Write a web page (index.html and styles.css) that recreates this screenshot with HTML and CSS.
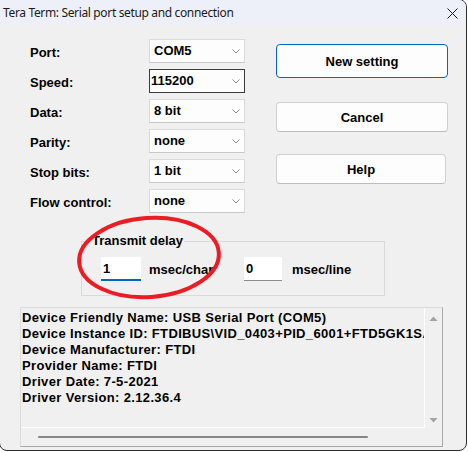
FILE: index.html
```html
<!DOCTYPE html>
<html>
<head>
<meta charset="utf-8">
<link rel="stylesheet" href="styles.css">
</head>
<body>
<div class="window">
  <div class="titlebar">
    <span class="title">Tera Term: Serial port setup and connection</span>
    <svg class="close" width="11" height="11" viewBox="0 0 11 11"><path d="M0.5 0.5L10.5 10.5M10.5 0.5L0.5 10.5" stroke="#1b1b1b" stroke-width="1" fill="none"/></svg>
  </div>
  <div class="content">
    <div class="top">
      <div class="fields">
        <div class="row"><span class="label">Port:</span><div class="combo"><span>COM5</span><svg class="chev" width="8" height="5" viewBox="0 0 8 5"><path d="M0.5 0.5L4 4L7.5 0.5" stroke="#8a8a8a" fill="none"/></svg></div></div>
        <div class="row"><span class="label">Speed:</span><div class="combo focus"><span>115200</span><svg class="chev" width="8" height="5" viewBox="0 0 8 5"><path d="M0.5 0.5L4 4L7.5 0.5" stroke="#8a8a8a" fill="none"/></svg></div></div>
        <div class="row"><span class="label">Data:</span><div class="combo"><span>8 bit</span><svg class="chev" width="8" height="5" viewBox="0 0 8 5"><path d="M0.5 0.5L4 4L7.5 0.5" stroke="#8a8a8a" fill="none"/></svg></div></div>
        <div class="row"><span class="label">Parity:</span><div class="combo"><span>none</span><svg class="chev" width="8" height="5" viewBox="0 0 8 5"><path d="M0.5 0.5L4 4L7.5 0.5" stroke="#8a8a8a" fill="none"/></svg></div></div>
        <div class="row"><span class="label">Stop bits:</span><div class="combo"><span>1 bit</span><svg class="chev" width="8" height="5" viewBox="0 0 8 5"><path d="M0.5 0.5L4 4L7.5 0.5" stroke="#8a8a8a" fill="none"/></svg></div></div>
        <div class="row"><span class="label">Flow control:</span><div class="combo"><span>none</span><svg class="chev" width="8" height="5" viewBox="0 0 8 5"><path d="M0.5 0.5L4 4L7.5 0.5" stroke="#8a8a8a" fill="none"/></svg></div></div>
      </div>
      <div class="buttons">
        <div class="btn default">New setting</div>
        <div class="btn cancel">Cancel</div>
        <div class="btn help">Help</div>
      </div>
    </div>
    <fieldset class="group">
      <legend>Transmit delay</legend>
      <div class="delay">
        <div class="edit e1">1</div>
        <span class="unit u1">msec/char</span>
        <div class="edit e2">0</div>
        <span class="unit u2">msec/line</span>
      </div>
    </fieldset>
    <div class="info">
      <div class="text">
        <div>Device Friendly Name: USB Serial Port (COM5)</div>
        <div>Device Instance ID: FTDIBUS\VID_0403+PID_6001+FTD5GK1SA\0000</div>
        <div>Device Manufacturer: FTDI</div>
        <div>Provider Name: FTDI</div>
        <div>Driver Date: 7-5-2021</div>
        <div>Driver Version: 2.12.36.4</div>
      </div>
      <div class="vsb">
        <svg width="9" height="5" viewBox="0 0 9 5"><path d="M0.5 5L4.5 0.5L8.5 5Z" fill="#a3a3a3"/></svg>
        <svg width="9" height="5" viewBox="0 0 9 5"><path d="M0.5 0L4.5 4.5L8.5 0Z" fill="#a3a3a3"/></svg>
      </div>
      <div class="hsb"><div class="thumb"></div></div>
      <div class="corner"></div>
    </div>
  </div>
  <svg class="annot" width="165" height="104" viewBox="0 0 165 104"><ellipse cx="82" cy="51.5" rx="70" ry="39.5" transform="rotate(-4 82 51.5)" fill="none" stroke="#ec1c24" stroke-width="4"/></svg>
</div>
</body>
</html>
```
FILE: styles.css
```css
* { box-sizing: border-box; }
html, body { margin: 0; padding: 0; background: #ffffff; }
body {
  width: 468px;
  height: 452px;
  overflow: hidden;
  font-family: "Liberation Sans", Arial, sans-serif;
  font-size: 13px;
  font-weight: bold;
  color: #000;
}
.window {
  position: relative;
  margin: -1px 0 0 -1px;
  width: 468px;
  height: 452px;
  border: 1px solid #2b2b2b;
  border-radius: 0 8px 8px 8px;
  background: #f0f0f0;
  overflow: hidden;
}
.titlebar {
  height: 25px;
  background: #eef0f9;
  display: flex;
  align-items: center;
  padding-left: 3px;
}
.title {
  font-family: "Noto Sans", sans-serif;
  font-weight: normal;
  font-size: 12px;
  letter-spacing: -0.35px;
  color: #1a1a1a;
}
.close { margin-left: auto; margin-right: 8px; margin-top: 1px; }
.content { padding: 14px 0 0 20px; }
.top { display: flex; padding-left: 10px; }
.fields { display: flex; flex-direction: column; gap: 6px; }
.row { display: flex; align-items: center; height: 24px; }
.label { width: 119px; padding-top: 2px; }
.combo {
  width: 96px;
  height: 24px;
  background: #fdfdfd;
  border: 1px solid #dadada;
  border-bottom-color: #c8c8c8;
  display: flex;
  align-items: center;
  justify-content: space-between;
  padding: 0 4px 0 4px;
  line-height: 22px;
}
.combo.focus { border-color: #3c3c3c; padding-left: 1px; }
.chev { display: block; }
.buttons { margin-left: 31px; margin-top: 5px; display: flex; flex-direction: column; }
.btn {
  width: 172px;
  height: 30px;
  background: #fdfdfd;
  border: 1px solid #d0d0d0;
  border-bottom-color: #bdbdbd;
  border-radius: 4px;
  display: flex;
  align-items: center;
  justify-content: center;
}
.btn.default { height: 34px; border-color: #0067c0; }
.btn.cancel { margin-top: 24px; }
.btn.help { margin-top: 22px; width: 170px; }
.group {
  margin: 20px 0 0 61px;
  width: 304px;
  border: 1px solid #d9d9d9;
  padding: 0 0 14px 0;
  min-width: 0;
}
.group legend {
  margin-left: 9px;
  padding: 0 1px;
  line-height: 16px;
}
.delay { display: flex; align-items: center; height: 24px; margin: 8px 0 0 19px; }
.edit {
  height: 24px;
  background: #fff;
  padding-left: 2px;
  line-height: 23px;
}
.e1 { width: 40px; border-bottom: 2px solid #0067c0; }
.e2 { width: 38px; border-bottom: 1px solid #8a8a8a; }
.unit { white-space: nowrap; }
.u1 { width: 95px; margin-left: 8px; }
.u2 { margin-left: 10px; }
.info {
  margin-top: 11px;
  width: 423px;
  height: 140px;
  border: 1px solid;
  border-color: #dcdcdc #a8a8a8 #a8a8a8 #dcdcdc;
  display: grid;
  grid-template-columns: 404px 17px;
  grid-template-rows: 120px 18px;
}
.text {
  border-right: 1px solid #ffffff;
  border-bottom: 1px solid #ffffff;
  padding: 2px 0 0 1px;
  overflow: hidden;
  white-space: nowrap;
  line-height: 16px;
  letter-spacing: 0.35px;
}
.vsb {
  display: flex;
  flex-direction: column;
  justify-content: space-between;
  align-items: center;
  padding: 8px 0 5px 0;
}
.vsb svg { display: block; }
.hsb { padding: 8px 0 0 17px; }
.thumb { width: 330px; height: 2px; background: #858585; border-radius: 1px; }
.annot { position: absolute; left: 67px; top: 206px; }
```
